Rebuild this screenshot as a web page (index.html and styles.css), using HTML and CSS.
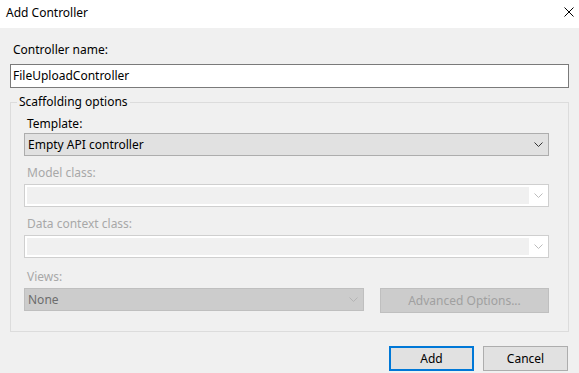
FILE: index.html
```html
<!DOCTYPE html>
<html lang="en">
<head>
  <meta charset="UTF-8" />
  <title>Add Controller</title>
  <link rel="stylesheet" href="styles.css">
</head>
<body>
  <div class="titlebar">
    <span class="title">Add Controller</span>
    <svg class="close" width="10" height="10" viewBox="0 0 10 10">
      <path d="M0.5 0.5 L9.5 9.5 M9.5 0.5 L0.5 9.5" stroke="#000" stroke-width="1" fill="none"/>
    </svg>
  </div>

  <div class="content">
    <label class="label name-label">Controller name:</label>
    <div class="textbox">FileUploadController</div>

    <fieldset class="group">
      <legend>Scaffolding options</legend>

      <div class="row first">
        <div class="label">Template:</div>
        <div class="combo">
          <span>Empty API controller</span>
          <svg class="chev" width="9" height="5" viewBox="0 0 9 5"><path d="M0.5 0.5 L4.5 4.5 L8.5 0.5" stroke="#333" fill="none"/></svg>
        </div>
      </div>

      <div class="row">
        <div class="label disabled">Model class:</div>
        <div class="combo off">
          <div class="fill"></div>
          <svg class="chev" width="9" height="5" viewBox="0 0 9 5"><path d="M0.5 0.5 L4.5 4.5 L8.5 0.5" stroke="#bcbcbc" fill="none"/></svg>
        </div>
      </div>

      <div class="row">
        <div class="label disabled">Data context class:</div>
        <div class="combo off">
          <div class="fill"></div>
          <svg class="chev" width="9" height="5" viewBox="0 0 9 5"><path d="M0.5 0.5 L4.5 4.5 L8.5 0.5" stroke="#bcbcbc" fill="none"/></svg>
        </div>
      </div>

      <div class="row views-row">
        <div class="label disabled">Views:</div>
        <div class="views-line">
          <div class="combo grey">
            <span>None</span>
            <svg class="chev" width="9" height="5" viewBox="0 0 9 5"><path d="M0.5 0.5 L4.5 4.5 L8.5 0.5" stroke="#b4b4b4" fill="none"/></svg>
          </div>
          <div class="btn grey-btn">Advanced Options...</div>
        </div>
      </div>
    </fieldset>

    <div class="actions">
      <div class="btn primary">Add</div>
      <div class="btn">Cancel</div>
    </div>
  </div>
</body>
</html>
```

FILE: styles.css
```css
body {
  margin: 0;
  width: 579px;
  height: 373px;
  overflow: hidden;
  background-color: #f0f0f0;
  font-family: 'Noto Sans', 'Open Sans', sans-serif;
  font-size: 12px;
  line-height: 16px;
  color: #000;
}

.titlebar {
  height: 28px;
  background-color: #fff;
  display: flex;
  align-items: center;
  justify-content: space-between;
  padding: 0 5px 0 6px;
}

.title {
  margin-top: -2px;
}

.close {
  margin-top: -4px;
}

.content {
  padding: 0 10px;
  display: flex;
  flex-direction: column;
}

.label {
  padding-left: 3px;
}

.name-label {
  margin-top: 14px;
}

.disabled {
  color: #a8a8a8;
}

.textbox {
  margin-top: 6px;
  height: 22px;
  line-height: 22px;
  border: 1px solid #7a7a7a;
  background-color: #fff;
  padding-left: 2px;
}

.group {
  margin: 6px 0 0;
  padding: 0 19px 18px 13px;
  border: 1px solid #dcdcdc;
  min-width: 0;
}

.group legend {
  margin-left: -7px;
  padding: 0 2px;
}

.row {
  margin-top: 9px;
  display: flex;
  flex-direction: column;
  gap: 3px;
}

.row.first {
  margin-top: 6px;
  gap: 1px;
}

.views-row {
  margin-top: 11px;
}

.combo {
  height: 21px;
  border: 1px solid #adadad;
  background-color: #e1e1e1;
  display: flex;
  align-items: center;
  justify-content: space-between;
  padding: 0 5px 0 3px;
}

.combo.off {
  border-color: #cfcfcf;
  background-color: #fff;
  padding: 2px 5px 2px 2px;
  height: 17px;
}

.combo .fill {
  flex: 1;
  height: 100%;
  background-color: #f0f0f0;
  margin-right: 5px;
}

.combo.grey {
  flex: 0 0 auto;
  width: 330px;
  background-color: #cccccc;
  border-color: #bfbfbf;
  color: #6d6d6d;
}

.views-line {
  display: flex;
  justify-content: space-between;
  align-items: flex-start;
}

.btn {
  box-sizing: border-box;
  width: 85px;
  height: 25px;
  border: 1px solid #adadad;
  background-color: #e1e1e1;
  display: flex;
  align-items: center;
  justify-content: center;
}

.grey-btn {
  width: 169px;
  background-color: #cccccc;
  border-color: #bfbfbf;
  color: #a0a0a0;
}

.primary {
  border: 2px solid #0078d7;
}

.actions {
  margin-top: 14px;
  display: flex;
  justify-content: flex-end;
  gap: 9px;
  padding-right: 1px;
}
```
